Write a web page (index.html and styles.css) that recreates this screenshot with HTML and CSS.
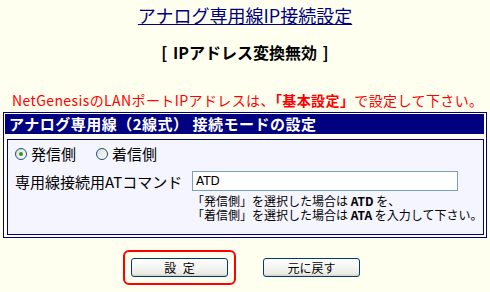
FILE: index.html
```html
<!DOCTYPE html>
<html lang="ja">
<head>
    <meta charset="UTF-8">
    <title>アナログ専用線IP接続設定</title>
    <link rel="stylesheet" href="styles.css">
</head>
<body>
    <!-- Page Title -->
    <h1 class="title"><a href="#">アナログ専用線IP接続設定</a></h1>
    <p class="mode">[ IPアドレス変換無効 ]</p>
    <p class="notice">NetGenesisのLANポートIPアドレスは、<b>「基本設定」</b>で設定して下さい。</p>

    <!-- Settings Panel -->
    <div class="panel">
        <div class="panel-head">アナログ専用線（2線式） 接続モードの設定</div>
        <div class="panel-body">
            <div class="radios">
                <label class="radio"><span class="dot checked"></span>発信側</label>
                <label class="radio"><span class="dot"></span>着信側</label>
            </div>
            <div class="row">
                <span class="label">専用線接続用ATコマンド</span>
                <div class="field">
                    <input class="text" type="text" value="ATD">
                    <p class="hint">「発信側」を選択した場合は <b>ATD</b> を、<br>「着信側」を選択した場合は <b>ATA</b> を入力して下さい。</p>
                </div>
            </div>
        </div>
    </div>

    <!-- Buttons -->
    <div class="buttons">
        <span class="focus"><button class="btn btn-set">設 定</button></span>
        <button class="btn">元に戻す</button>
    </div>
</body>
</html>
```

FILE: styles.css
```css
/* General Reset */
* {
    margin: 0;
    padding: 0;
    box-sizing: border-box;
}

body {
    font-family: "Noto Sans CJK JP", "DejaVu Sans", sans-serif;
    background-color: #fffff0;
    color: #000000;
    font-size: 15px;
    padding: 0 3px;
    white-space: nowrap;
}

.title {
    text-align: center;
    font-size: 18px;
    font-weight: normal;
    line-height: 20px;
    padding-top: 5px;
}

.title a {
    color: #000080;
    text-decoration: underline;
}

.mode {
    text-align: center;
    font-size: 16px;
    font-weight: bold;
    line-height: 20px;
    margin-top: 17px;
    word-spacing: 2px;
}

.notice {
    color: #ff0000;
    font-size: 14px;
    line-height: 20px;
    margin-top: 28px;
    padding-left: 9px;
    letter-spacing: 0.4px;
}

/* Panel */
.panel {
    margin-top: 2px;
    border: 1px solid #000080;
    padding: 1px 2px 2px 1px;
}

.panel-head {
    background-color: #000080;
    color: #ffffff;
    font-weight: bold;
    font-size: 15px;
    line-height: 20px;
    padding-left: 4px;
    letter-spacing: 0.5px;
}

.panel-body {
    margin: 5px 0 0 2px;
    border: 1px solid #000080;
    background-color: #f5f5ff;
    padding: 4px 8px 12px 7px;
}

.radios {
    display: flex;
    gap: 20px;
    line-height: 20px;
}

.radio {
    display: flex;
    align-items: center;
    gap: 4px;
}

.dot {
    width: 12px;
    height: 12px;
    border-radius: 50%;
    border: 1px solid #1c5180;
    background: linear-gradient(135deg, #dcdcd6, #ffffff);
    display: flex;
    justify-content: center;
    align-items: center;
}

.dot.checked::after {
    content: "";
    width: 4px;
    height: 4px;
    border-radius: 50%;
    background-color: #21a121;
}

.row {
    display: flex;
    margin-top: 7px;
}

.label {
    flex: none;
    width: 177px;
    font-size: 15px;
    line-height: 20px;
    padding-top: 1px;
}

.field {
    flex: none;
}

.text {
    display: block;
    width: 266px;
    height: 20px;
    border: 1px solid #7f9db9;
    background-color: #ffffff;
    font-family: "DejaVu Sans", sans-serif;
    font-size: 12px;
    padding: 0 3px;
}

.hint {
    font-size: 12px;
    line-height: 14px;
    margin-top: 3px;
}

/* Buttons */
.buttons {
    display: flex;
    justify-content: center;
    align-items: center;
    gap: 27px;
    margin-top: 12px;
    padding-right: 2px;
}

.focus {
    border: 2px solid #ff0000;
    border-radius: 6px;
    padding: 6px 6px;
    margin-left: -5px;
}

.btn {
    display: block;
    width: 97px;
    height: 19px;
    border: 1px solid #003c74;
    border-radius: 3px;
    background: linear-gradient(#ffffff, #ecece6 85%, #d6d0c5);
    font-family: "Noto Sans CJK JP", sans-serif;
    font-size: 12px;
    line-height: 16px;
    color: #000000;
}

.btn-set {
    word-spacing: 4px;
}
```
